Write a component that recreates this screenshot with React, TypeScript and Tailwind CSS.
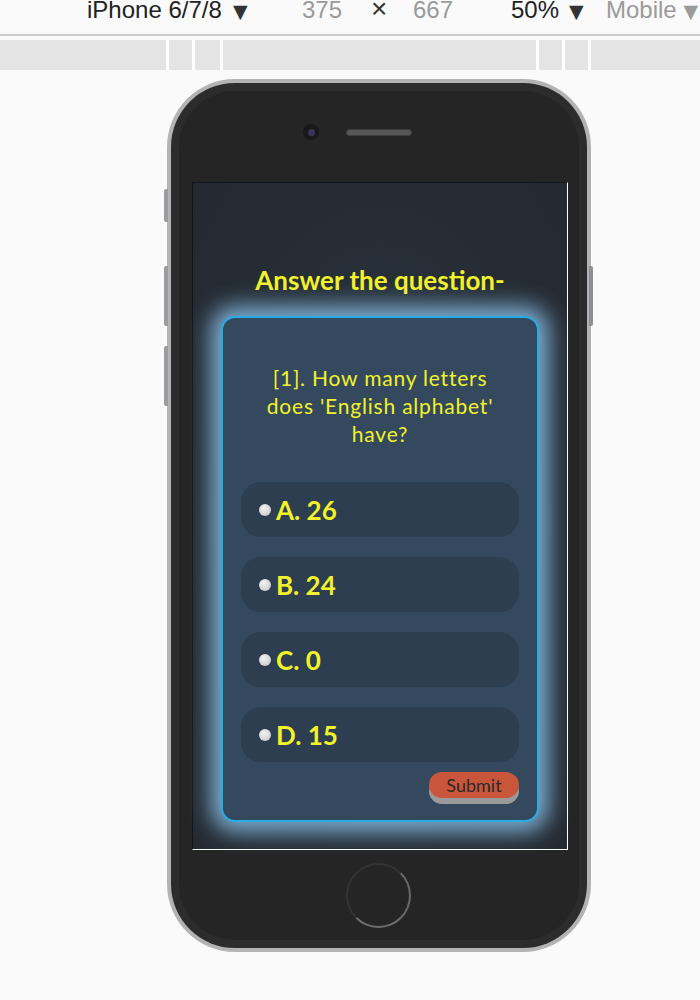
export default function App() {
  const options = ["A. 26", "B. 24", "C. 0", "D. 15"];
  const comic = "font-['Comic_Sans_MS','Lato',sans-serif]";
  return (
    <div className="w-[700px] h-[1000px] bg-[#fafafa] overflow-hidden font-['Liberation_Sans',sans-serif]">
      {/* devtools toolbar */}
      <div className="h-[34px] overflow-hidden">
        <div className="flex items-baseline text-[24px] leading-[24px] mt-[-3px] whitespace-nowrap pl-[87px]">
          <span className="w-[146px] shrink-0 text-[#222]">iPhone 6/7/8</span>
          <span className="w-[69px] shrink-0 text-[19px] text-[#333] font-['DejaVu_Sans',sans-serif]">▼</span>
          <span className="w-[69px] shrink-0 text-[#9a9a9a]">375</span>
          <span className="w-[42px] shrink-0 text-[28px] text-[#333]">×</span>
          <span className="w-[98px] shrink-0 text-[#9a9a9a]">667</span>
          <span className="w-[58px] shrink-0 text-[#222]">50%</span>
          <span className="w-[37px] shrink-0 text-[19px] text-[#333] font-['DejaVu_Sans',sans-serif]">▼</span>
          <span className="shrink-0 text-[#9a9a9a]">
            Mobile <span className="text-[19px] font-['DejaVu_Sans',sans-serif]">▼</span>
          </span>
        </div>
      </div>
      <div className="h-[2px] bg-[#cbcbcb]" />
      <div className="mt-[4px] h-[30px] flex gap-[3px] bg-white">
        <div className="w-[166px] bg-[#e4e4e4]" />
        <div className="w-[23px] bg-[#e4e4e4]" />
        <div className="w-[25px] bg-[#e4e4e4]" />
        <div className="w-[313px] bg-[#e4e4e4]" />
        <div className="w-[23px] bg-[#e4e4e4]" />
        <div className="w-[23px] bg-[#e4e4e4]" />
        <div className="flex-1 bg-[#e4e4e4]" />
      </div>

      {/* phone */}
      <div className="relative ml-[167px] mt-[9px] w-[424px] h-[873px] rounded-[68px] bg-[#b3b3b3] p-[4px]">
        <div className="absolute left-[-3px] top-[110px] w-[4px] h-[33px] rounded-l-[2px] bg-[#9c9ca0]" />
        <div className="absolute left-[-3px] top-[187px] w-[4px] h-[60px] rounded-l-[2px] bg-[#9c9ca0]" />
        <div className="absolute left-[-3px] top-[267px] w-[4px] h-[60px] rounded-l-[2px] bg-[#9c9ca0]" />
        <div className="absolute right-[-2px] top-[187px] w-[4px] h-[60px] rounded-r-[2px] bg-[#8e8e94]" />
        <div className="h-full rounded-[64px] bg-[#2c2c2c] p-[8px]">
          <div className="h-full rounded-[56px] bg-[#252525] flex flex-col pl-[13px]">
            <div className="h-[91px] shrink-0 flex items-start pt-[33px] pl-[111px]">
              <div className="w-4 h-4 rounded-full bg-[#19191b] flex items-center justify-center">
                <div className="w-[7px] h-[7px] rounded-full bg-[#3a3558]" />
              </div>
              <div className="ml-[27px] mt-[5px] w-[66px] h-[7px] rounded-full bg-[#575757] border border-[#3e3e3e]" />
            </div>

            {/* screen */}
            <div className="w-[376px] h-[668px] shrink-0 border-t border-l border-t-[#141414] border-l-[#141414] border-r border-b border-r-white border-b-white bg-[radial-gradient(ellipse_at_center,#2b3846_0%,#262d35_60%,#242a31_100%)] flex flex-col items-center">
              <div className={`pt-[81px] h-[113px] text-[26px] leading-[32px] font-bold text-[#f2f22a] ${comic}`}>
                Answer the question-
              </div>
              <div className="mt-[20px] w-[318px] h-[506px] shrink-0 border-2 border-[#29abe6] rounded-[14px] bg-[#34495e] shadow-[0_0_22px_10px_rgba(140,198,240,0.85)] flex flex-col px-[18px] pt-[46px]">
                <div className={`text-center text-[21px] leading-[28px] tracking-[0.8px] text-[#f2f22a] ${comic}`}>
                  [1]. How many letters
                  <br />
                  does 'English alphabet'
                  <br />
                  have?
                </div>
                <div className="mt-[34px] flex flex-col gap-[20px]">
                  {options.map((o) => (
                    <div key={o} className="h-[55px] rounded-[20px] bg-[#2c3e50] flex items-center pl-[18px]">
                      <div className="w-[12px] h-[12px] rounded-full bg-[radial-gradient(circle_at_40%_35%,#f2f2f2,#d6d6d6_60%,#b8b8b8)]" />
                      <span className={`ml-[5px] text-[26px] leading-[32px] font-bold text-[#f2f22a] ${comic}`}>{o}</span>
                    </div>
                  ))}
                </div>
                <div className="self-end mt-[10px] w-[90px] h-[26px] rounded-full bg-[#c9563a] shadow-[0_6px_0_#9a9a9a] flex items-center justify-center">
                  <span className={`text-[18px] leading-[22px] text-[#2a2a2a] ${comic}`}>Submit</span>
                </div>
              </div>
            </div>

            <div className="pt-[13px] pl-[154px]">
              <div className="w-[65px] h-[65px] rounded-full border-2 border-[#333] border-r-[#686868] border-b-[#6e6e6e]" />
            </div>
          </div>
        </div>
      </div>
    </div>
  );
}
